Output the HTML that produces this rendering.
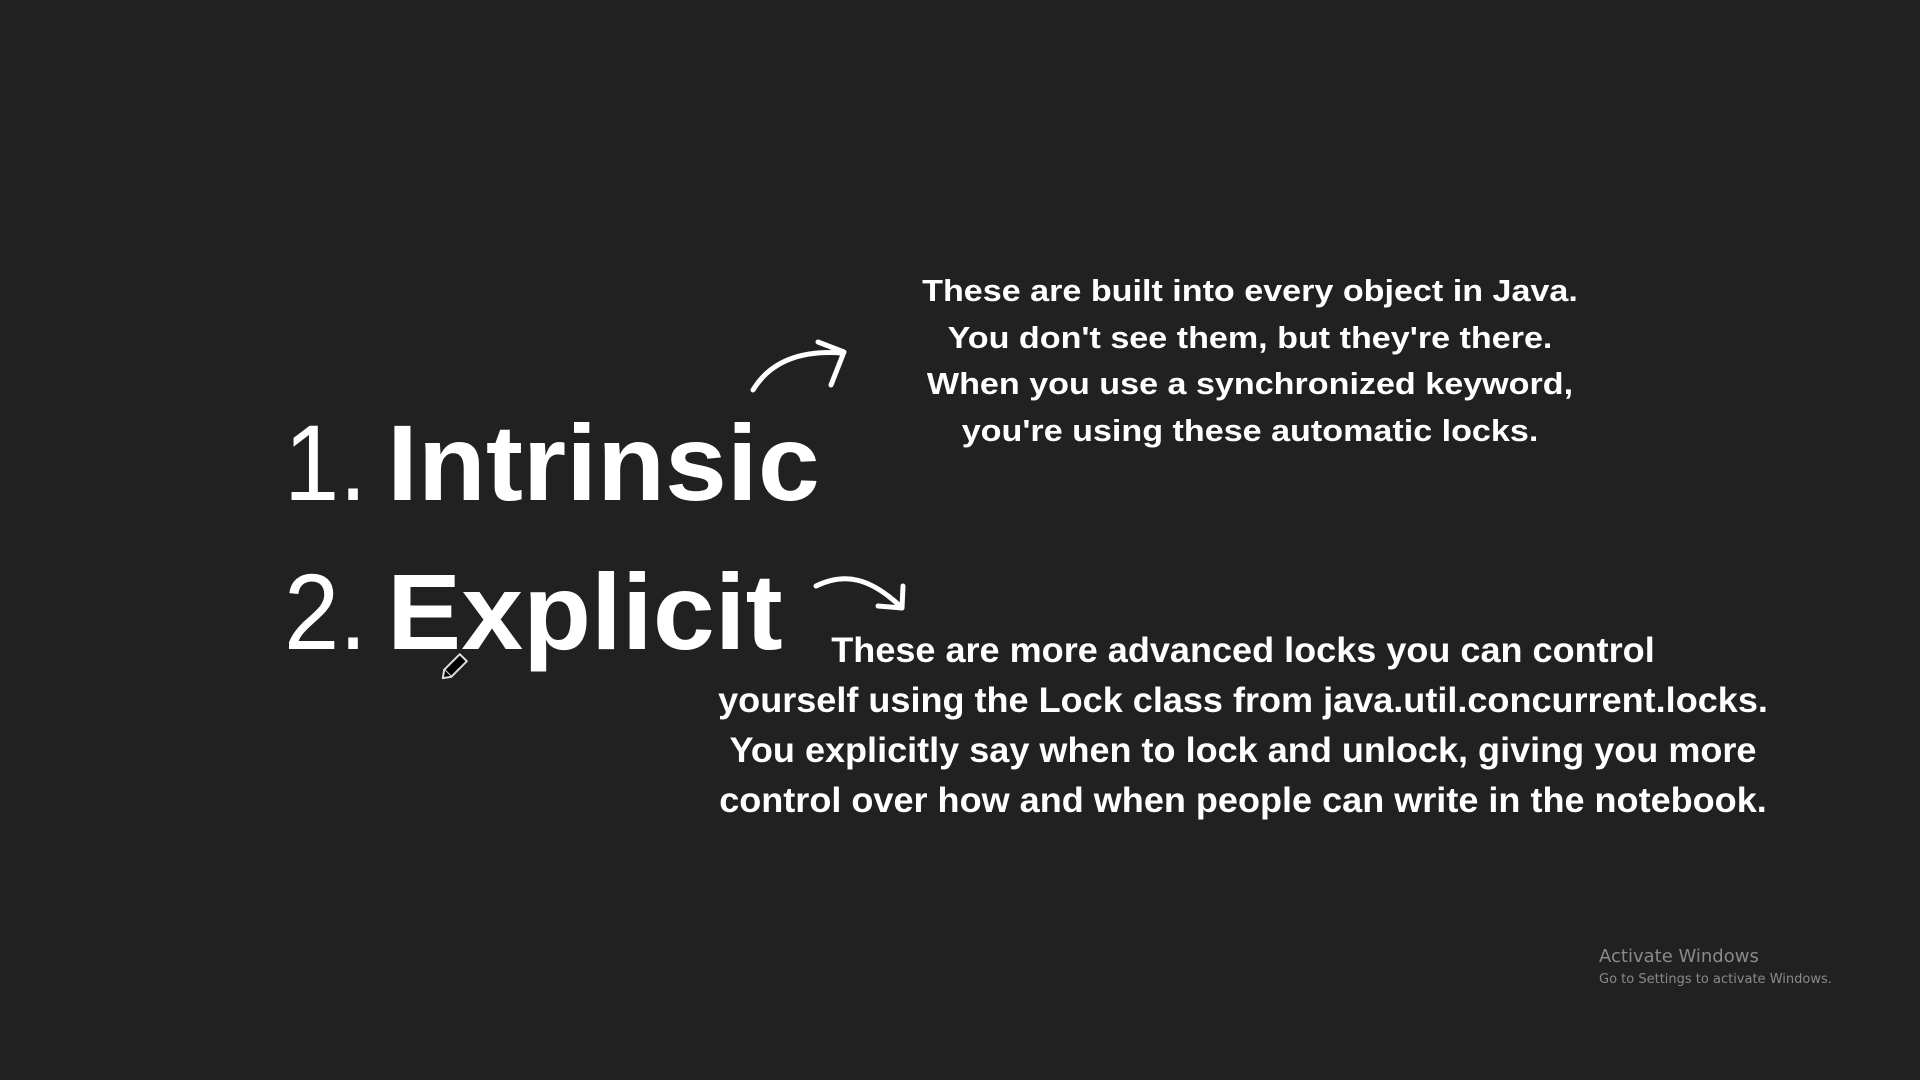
<!DOCTYPE html>
<html><head><meta charset="utf-8"><style>
html,body{margin:0;padding:0;}
body{width:1920px;height:1080px;background:#212121;position:relative;overflow:hidden;font-family:"Liberation Sans",sans-serif;color:#fff;}
.big{position:absolute;font-weight:bold;font-size:108px;line-height:1;transform-origin:left top;transform:scaleX(1.03);white-space:nowrap;}
.num{position:absolute;font-size:108px;line-height:1;transform-origin:left top;transform:scaleX(0.92);white-space:nowrap;}
.blk{position:absolute;text-align:center;font-weight:bold;white-space:nowrap;transform-origin:center top;}
.b1{left:750px;width:1000px;top:268px;font-size:31px;line-height:46.5px;transform:scaleX(1.1);}
.b2{left:543px;width:1400px;top:626px;font-size:35px;line-height:50px;transform:scaleX(1.03);}
.aw{position:absolute;left:1599px;top:946px;color:#8a8a8a;font-family:"DejaVu Sans","Liberation Sans",sans-serif;}
</style></head><body>
<div class="num" style="left:284px;top:409px;">1.</div>
<div class="big" style="left:387px;top:409px;">Intrinsic</div>
<div class="num" style="left:284px;top:558px;">2.</div>
<div class="big" style="left:387px;top:558px;">Explicit</div>
<svg width="1920" height="1080" style="position:absolute;left:0;top:0" fill="none" stroke="#fff" stroke-width="5" stroke-linecap="round" stroke-linejoin="round">
<path d="M753 390 C770 362 800 350 842 353"/>
<path d="M818 342 L844 352 L831 385"/>
<path d="M816 586 C845 572 870 578 900 606"/>
<path d="M903 586 L902 608 L878 606"/>
<g transform="translate(452,669) rotate(45)" stroke-width="2">
<rect x="-5" y="-16" width="10" height="22" fill="#000" stroke="#ddd"/>
<path d="M-5 6 L0 13 L5 6" stroke="#ddd" fill="#000"/>
</g>
</svg>
<div class="blk b1">These are built into every object in Java.<br>You don't see them, but they're there.<br>When you use a synchronized keyword,<br>you're using these automatic locks.</div>
<div class="blk b2">These are more advanced locks you can control<br>yourself using the Lock class from java.util.concurrent.locks.<br>You explicitly say when to lock and unlock, giving you more<br>control over how and when people can write in the notebook.</div>
<div class="aw"><div style="font-size:18px;">Activate Windows</div><div style="font-size:13px;margin-top:5px;">Go to Settings to activate Windows.</div></div>
</body></html>
